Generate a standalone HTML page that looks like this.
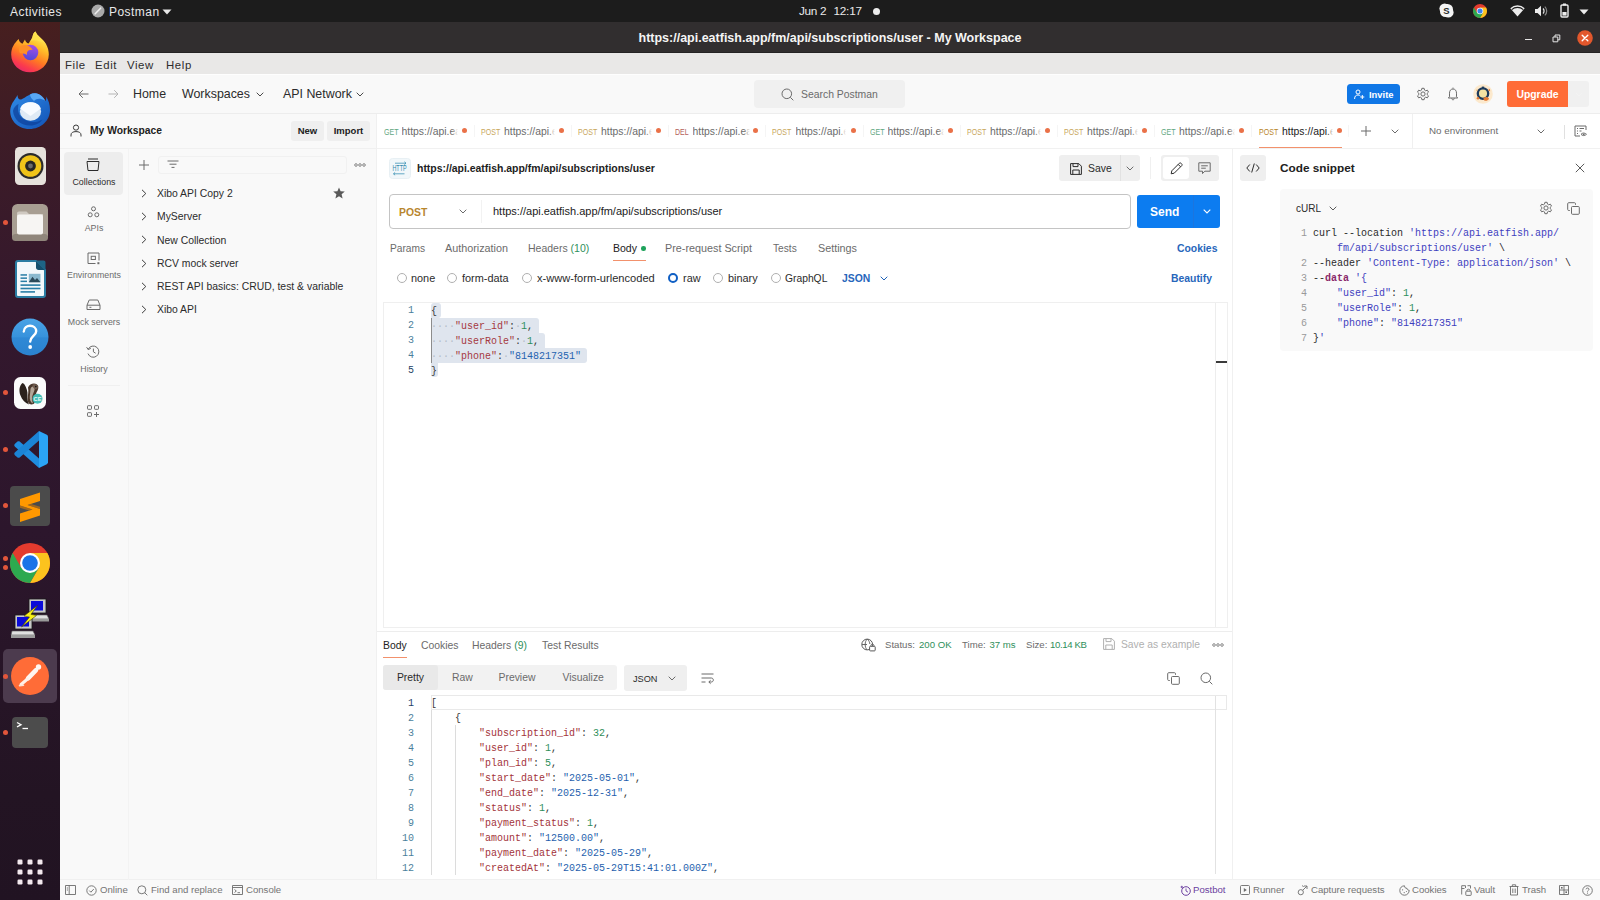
<!DOCTYPE html>
<html>
<head>
<meta charset="utf-8">
<title>Postman</title>
<style>
*{box-sizing:border-box;margin:0;padding:0}
html,body{width:1600px;height:900px;overflow:hidden;background:#fff}
body{font-family:"Liberation Sans",sans-serif;font-size:10.4px;color:#212121;position:relative}
.a{position:absolute;white-space:nowrap}
.t{position:absolute;white-space:nowrap;line-height:14px;height:14px}
svg{position:absolute;overflow:visible}
.mono{font-family:"Liberation Mono",monospace;font-size:10px}
.g{color:#6b6b6b}
/* region backgrounds */
#topbar{left:0;top:0;width:1600px;height:22px;background:#1c1c1c}
#dock{left:0;top:22px;width:60px;height:878px;background:linear-gradient(180deg,#471f1f 0%,#3d1c27 13.5%,#34182d 32%,#2c162c 58%,#231423 88%,#211322 100%)}
#titlebar{left:60px;top:22px;width:1540px;height:31px;background:#312e2f;border-bottom:1px solid #252324}
#menubar{left:60px;top:53px;width:1540px;height:21px;background:#e9e8e7}
#header{left:60px;top:74px;width:1540px;height:40px;background:#f9f9f9;border-top:1px solid #fefefe;border-bottom:1px solid #ededed}
#side{left:60px;top:114px;width:317px;height:766px;background:#f9f9f9;border-right:1px solid #f0f0f0}
#footer{left:60px;top:879px;width:1540px;height:21px;background:#f9f9f9;border-top:1px solid #f0f0f0}
</style>
</head>
<body>
<div class="a" id="topbar"></div>
<div class="a" id="dock"></div>
<div class="a" id="titlebar"></div>
<div class="a" id="menubar"></div>
<div class="a" id="header"></div>
<div class="a" id="side"></div>
<div class="a" id="footer"></div>
<!-- top bar -->
<div class="t" style="left:10px;top:4.5px;font-size:12px;letter-spacing:.45px;color:#e8e8e8">Activities</div>
<svg style="left:91px;top:4px" width="14" height="14" viewBox="0 0 14 14"><circle cx="7" cy="7" r="6.5" fill="#a9a9a9"/><path d="M4.2 9.8 L9.6 4.2" stroke="#ededed" stroke-width="1.6" stroke-linecap="round"/></svg>
<div class="t" style="left:109px;top:4.5px;font-size:12px;letter-spacing:.45px;color:#e8e8e8">Postman</div>
<svg style="left:162px;top:9px" width="10" height="6" viewBox="0 0 10 6"><path d="M0.5 0.5 H9.5 L5 5.5Z" fill="#e8e8e8"/></svg>
<div class="t" style="left:799px;top:4px;font-size:11.8px;letter-spacing:-.3px;color:#e8e8e8">Jun 2</div><div class="t" style="left:833.5px;top:4px;font-size:11.8px;letter-spacing:-.25px;color:#e8e8e8">12:17</div>
<div class="a" style="left:873px;top:7.5px;width:7px;height:7px;border-radius:50%;background:#ececec"></div>
<!-- tray -->
<svg style="left:1439px;top:3px" width="15" height="15" viewBox="0 0 15 15"><circle cx="5.600" cy="5.600" r="5.200" fill="#f4f4f4"/><circle cx="9.400" cy="9.400" r="5.200" fill="#f4f4f4"/><rect x="1" y="1" width="13" height="13" rx="5.500" fill="#f4f4f4"/><text x="7.500" y="11" font-family="Liberation Sans" font-weight="700" font-size="9.500" text-anchor="middle" fill="#2a2a2a">S</text></svg>
<svg style="left:1473px;top:3.500px" width="14" height="14" viewBox="0 0 40 40"><circle cx="20" cy="20" r="20" fill="#e33b2e"/><path d="M20 10 H37.320 A20 20 0 0 1 20 40 L28.660 25 L20 20Z" fill="#fcc31e"/><path d="M20 40 A20 20 0 0 1 2.680 10 L11.340 25 L20 20 L28.660 25Z" fill="#2da94f"/><circle cx="20" cy="20" r="9.500" fill="#f1f1f1"/><circle cx="20" cy="20" r="7.200" fill="#3b82f0"/></svg>
<svg style="left:1510px;top:5px" width="15" height="12" viewBox="0 0 15 12"><path d="M7.500 11.500 L0.300 3.200 A10.500 10.500 0 0 1 14.700 3.200 Z" fill="#ececec"/><path d="M1.700 4.600 A8.600 8.600 0 0 1 13.300 4.600" fill="none" stroke="#1c1c1c" stroke-width="1.100"/></svg>
<svg style="left:1534px;top:4px" width="15" height="14" viewBox="0 0 15 14"><path d="M1 5 H3.500 L7 1.800 V12.200 L3.500 9 H1Z" fill="#ececec"/><path d="M9 4.500 A3.500 3.500 0 0 1 9 9.500" stroke="#ececec" stroke-width="1.200" fill="none"/><path d="M10.800 2.600 A6 6 0 0 1 10.800 11.400" stroke="#8a8a8a" stroke-width="1.200" fill="none"/></svg>
<svg style="left:1560px;top:3px" width="9" height="15" viewBox="0 0 9 15"><rect x="3" y="0.500" width="3" height="2" fill="#ececec"/><rect x="1" y="2" width="7" height="12" rx="1" fill="none" stroke="#ececec" stroke-width="1.400"/><rect x="2.400" y="9" width="4.200" height="3.600" fill="#ececec"/></svg>
<svg style="left:1579px;top:9px" width="10" height="6" viewBox="0 0 10 6"><path d="M0.500 0.500 H9.500 L5 5.500Z" fill="#ececec"/></svg>
<!-- title bar -->
<div class="t" style="left:60px;top:31px;width:1540px;text-align:center;font-size:13.4px;font-weight:700;transform:scaleX(.933);color:#f5f5f5">https://api.eatfish.app/fm/api/subscriptions/user - My Workspace</div>
<div class="a" style="left:1525px;top:39px;width:7px;height:1.200px;background:#e6e6e6"></div>
<svg style="left:1552px;top:33.500px" width="9" height="9" viewBox="0 0 9 9"><path d="M1 3 H5.800 V7.800 H1Z M3 3 V1 H7.800 V5.800 H5.800" fill="none" stroke="#e6e6e6" stroke-width="1"/></svg>
<svg style="left:1577px;top:29.500px" width="16" height="16" viewBox="0 0 16 16"><circle cx="8" cy="8" r="7.800" fill="#e2572c"/><path d="M5.2 5.2 L10.8 10.8 M10.8 5.2 L5.2 10.8" stroke="#fff" stroke-width="1.4" stroke-linecap="round"/></svg>
<!-- menu bar -->
<div class="t" style="left:65px;top:57.5px;font-size:11.4px;letter-spacing:.6px;color:#2d2d2d">File</div>
<div class="t" style="left:95px;top:57.5px;font-size:11.4px;letter-spacing:.6px;color:#2d2d2d">Edit</div>
<div class="t" style="left:127px;top:57.5px;font-size:11.4px;letter-spacing:.6px;color:#2d2d2d">View</div>
<div class="t" style="left:166px;top:57.5px;font-size:11.4px;letter-spacing:.6px;color:#2d2d2d">Help</div>
<!--TOPBAR_END-->
<!-- dock icons -->
<!-- firefox -->
<svg style="left:10px;top:31px" width="40" height="42" viewBox="0 0 40 42">
<defs><linearGradient id="ffg" x1="0.75" y1="0.05" x2="0.3" y2="1"><stop offset="0" stop-color="#fff060"/><stop offset="0.3" stop-color="#ffc02a"/><stop offset="0.6" stop-color="#ff7a22"/><stop offset="0.85" stop-color="#fb3a4e"/><stop offset="1" stop-color="#e82a6a"/></linearGradient>
<linearGradient id="ffp" x1="0.6" y1="0" x2="0.4" y2="1"><stop offset="0" stop-color="#a74fe6"/><stop offset="1" stop-color="#5148d8"/></linearGradient></defs>
<path d="M25.500 0.500 C27 5 33 8 36 13 C38 16.500 38.800 20 38.800 23.500 C38.800 33.500 30.500 41.300 20 41.300 C9.500 41.300 1.200 33.500 1.200 23.500 C1.200 16.500 4.500 12 8.700 8 C9 10.500 10.500 12 12.500 12.800 C13.500 11 14.500 9.500 15 8.500 C15.500 10.500 16.500 12 18.500 12.500 C20.500 10 22.500 7 22.800 4.500 C23 3 24 1.500 25.500 0.500Z" fill="url(#ffg)"/>
<circle cx="20.500" cy="21.500" r="7.800" fill="url(#ffp)"/>
<path d="M9 16 C13 12.500 19.500 13.500 22.800 18.800 C20.300 18.300 18.200 19 17.200 21 C16.800 22 16.800 23 17 24 C15 22.500 12.500 21.800 10 22.300 C9 20.500 8.700 18 9 16Z" fill="#ff8f28"/>
<path d="M25.500 0.500 C27 5 33 8 36 13 C34 11 31.500 10.300 29.500 10.500 C27.500 9.500 25.500 9 23.500 9.200 C22 9.300 20.200 10 18.500 12.500 C20.500 10 22.500 7 22.800 4.500 C23 3 24 1.500 25.500 0.500Z" fill="#ffe14d" opacity="0.9"/>
</svg>
<!-- thunderbird -->
<svg style="left:9px;top:89px" width="42" height="41" viewBox="0 0 42 41">
<defs><linearGradient id="tbg" x1="0" y1="0" x2="1" y2="1"><stop offset="0" stop-color="#2f8be8"/><stop offset="1" stop-color="#1252b5"/></linearGradient></defs>
<path d="M8.5 6 C6 11 3 13 1.5 19 C-0.5 30 8 40 20.5 40 C32 40 41 31.5 41 21 C41 15.5 39.5 11 37 7.5 C37.5 9.5 37 11 36.5 12 C33 5.5 26.5 2.5 21 5.5 C16 8 13.5 10.5 11.5 10.5 C9.5 10.5 8.5 8.5 8.5 6Z" fill="url(#tbg)"/>
<path d="M21 5.500 C26 2.500 33 5 36 11.500 C31 9 27.500 9.500 25 12 C23 10 21 8 21 5.500Z" fill="#58a8f5"/>
<ellipse cx="21.500" cy="22.500" rx="10.600" ry="9.300" fill="#dfeaf5"/>
<path d="M11.200 19.500 L21.500 27 L31.800 19.500 C30 15 26.500 13.300 21.500 13.300 C16.500 13.300 13 15 11.200 19.500Z" fill="#f8fbff"/>
<path d="M4 22 C5 31 12 36.500 21 36.500 C27 36.500 31 34 33.500 30.500 C28 34 20 34 14.500 30 C10 27 8 22 9.500 15 C6.500 16.500 4.500 19 4 22Z" fill="#0d3f99" opacity="0.7"/>
</svg>
<!-- rhythmbox -->
<svg style="left:15px;top:147px" width="31" height="38" viewBox="0 0 31 38"><rect width="31" height="38" rx="4.5" fill="#e6e2dc"/><circle cx="15.500" cy="19" r="13" fill="#2b2b2b"/><circle cx="15.500" cy="19" r="10.800" fill="#f0c419"/><circle cx="15.500" cy="19" r="5.400" fill="#262626"/><circle cx="15.500" cy="19" r="2.400" fill="#6b6b6b"/></svg>
<!-- files -->
<svg style="left:12px;top:204px" width="36" height="37" viewBox="0 0 36 37"><rect width="36" height="37" rx="5.500" fill="#a89e92"/><rect y="30" width="36" height="7" rx="3.500" fill="#90867b"/><path d="M5 9.500 C5 8.400 5.800 7.500 7 7.500 H14.500 L17 10 H31 V13 H5Z" fill="#d0c9c1"/><rect x="5" y="10.500" width="26" height="20" rx="2" fill="#f7f5f3"/></svg>
<div class="a" style="left:3px;top:220px;width:5px;height:5px;border-radius:50%;background:#e2563b"></div>
<!-- libreoffice writer -->
<svg style="left:15px;top:260px" width="31" height="38" viewBox="0 0 31 38"><path d="M3 1 H21 L30 10 V35 C30 36.200 29.200 37 28 37 H3 C1.800 37 1 36.200 1 35 V3 C1 1.800 1.800 1 3 1Z" fill="#f3f8fb" stroke="#2b7da3" stroke-width="2"/><path d="M21 0.500 L30.500 10 L30.500 2.500 C30.500 1.300 29.700 0.500 28.500 0.500Z" fill="#1d6485"/><path d="M21 1 L30 10 H23.500 C22 10 21 9 21 7.500Z" fill="#15506e"/><rect x="5.500" y="14.200" width="6.500" height="1.500" fill="#2a7ea6"/><rect x="5.500" y="17.400" width="6.500" height="1.500" fill="#2a7ea6"/><rect x="5.500" y="20.600" width="6.500" height="1.500" fill="#2a7ea6"/><rect x="13.800" y="13.800" width="11.700" height="8.400" fill="#8ab9cf"/><path d="M13.800 22.200 L17.500 16.800 L20 20 L22 18 L25.500 22.200Z" fill="#2c4a5a"/><rect x="5.500" y="24.300" width="20" height="1.600" fill="#2a7ea6"/><rect x="5.500" y="27.700" width="20" height="1.600" fill="#2a7ea6"/><rect x="5.500" y="31.100" width="14.500" height="1.600" fill="#2a7ea6"/></svg>
<!-- help -->
<svg style="left:11px;top:318px" width="38" height="38" viewBox="0 0 38 38"><defs><linearGradient id="hg" x1="0" y1="0" x2="0" y2="1"><stop offset="0" stop-color="#4aa3e6"/><stop offset="0.5" stop-color="#3792dc"/><stop offset="0.52" stop-color="#2f89d6"/><stop offset="1" stop-color="#2b82cf"/></linearGradient></defs><circle cx="19" cy="19" r="18.500" fill="url(#hg)"/><path d="M12.800 13.500 C13 9.500 16 7.800 19 7.800 C22.500 7.800 25.200 10 25.200 13.200 C25.200 17.500 19.200 18.500 19.200 23.500" fill="none" stroke="#fff" stroke-width="2.400" stroke-linecap="round"/><circle cx="19.200" cy="29" r="1.900" fill="#fff"/></svg>
<!-- beaver -->
<svg style="left:14px;top:377px" width="32" height="32" viewBox="0 0 32 32"><rect width="32" height="32" rx="6.500" fill="#fbfbfb"/><path d="M8.500 6 C5.500 8.500 4.500 13.500 6.500 18.500 C8 22.500 11 26 15 27.500 C13.500 24.500 13.200 21.500 13.500 18.500 C13.800 14.500 12.500 10.500 10.500 7.500 C9.800 6.600 9.200 6.200 8.500 6Z" fill="#2b211c"/><path d="M14 10.500 C15.500 7 20 5.500 23 7.500 C25 9 24.500 12 23.300 14 C22 16 21.500 18.500 22 21 C22.500 24.500 20.500 27.500 17.500 27.500 C14.500 27.500 13.200 24.500 13.600 21 C14 17.500 14.800 14 14 10.500Z" fill="#4a372b"/><path d="M16.500 12 C17 9.500 19.500 8.800 20.500 10.500 C21.200 13 19.500 15.500 18.500 18.500 C17.800 21 18 24 19 26.500 C16.500 25.500 15.500 22.500 15.800 19.500 C16 17 16.300 14.500 16.500 12Z" fill="#b3a597"/><path d="M18.500 7.500 C20.500 6.200 23.500 7 24 9.500 C24.300 11.500 22.500 12.500 21 12 C19.500 11.500 18.500 9.800 18.500 7.500Z" fill="#6e5a4c"/><circle cx="21.800" cy="9.600" r="0.800" fill="#111"/><circle cx="23.500" cy="21.800" r="5" fill="#45bdb6"/><text x="23.500" y="24" font-family="Liberation Sans" font-weight="700" font-size="5.600" text-anchor="middle" fill="#eafaf8">CE</text></svg>
<div class="a" style="left:3px;top:390px;width:5px;height:5px;border-radius:50%;background:#e2563b"></div>
<!-- vscode -->
<svg style="left:12px;top:430px" width="37" height="39" viewBox="0 0 37 39"><path d="M27 28.500 L27 38 L3 16.800 C2 15.900 2 14.600 3 13.700 L5.500 11.500 C6.200 11 7 11 7.700 11.600Z" fill="#1f8de0"/><path d="M27 10.500 L27 1 L3 22.200 C2 23.100 2 24.400 3 25.300 L5.500 27.500 C6.200 28 7 28 7.700 27.400Z" fill="#1b84d6"/><path d="M27 1 L34.800 4.800 C35.600 5.200 36 5.900 36 6.700 V32.300 C36 33.100 35.600 33.800 34.800 34.200 L27 38Z" fill="#2ba4f6"/></svg>
<div class="a" style="left:3px;top:447px;width:5px;height:5px;border-radius:50%;background:#e2563b"></div>
<!-- sublime -->
<svg style="left:10px;top:486px" width="40" height="40" viewBox="0 0 40 40"><rect width="40" height="40" rx="4" fill="#4b4b4b"/><path d="M10 13 L30 6.500 V15 L17.500 19 L30 23 V29.500 L10 36 V27.500 L22.500 23.500 L10 19.500Z" fill="#ff9800"/><path d="M10 19.500 L22.500 23.500 L19 24.600 L10 21.800Z M30 23 L17.500 19 L21 17.900 L30 20.700Z" fill="#d97800" opacity="0.6"/></svg>
<div class="a" style="left:3px;top:503px;width:5px;height:5px;border-radius:50%;background:#e2563b"></div>
<!-- chrome -->
<svg style="left:10px;top:543px" width="40" height="40" viewBox="0 0 40 40"><circle cx="20" cy="20" r="20" fill="#e33b2e"/><path d="M20 10 H37.320 A20 20 0 0 1 20 40 L28.660 25 L20 20Z" fill="#fcc31e"/><path d="M20 40 A20 20 0 0 1 2.680 10 L11.340 25 L20 20 L28.660 25Z" fill="#2da94f"/><circle cx="20" cy="20" r="10" fill="#fff"/><circle cx="20" cy="20" r="7.800" fill="#1a73e8"/></svg>
<div class="a" style="left:3px;top:556px;width:5px;height:5px;border-radius:50%;background:#e2563b"></div>
<div class="a" style="left:3px;top:565px;width:5px;height:5px;border-radius:50%;background:#e2563b"></div>
<!-- putty -->
<svg style="left:10px;top:598px" width="40" height="42" viewBox="0 0 40 42">
<g><rect x="19" y="1" width="17" height="14" fill="#c8c8c8" stroke="#1a1a1a" stroke-width="0.800"/><rect x="21" y="3" width="12" height="9.500" fill="#0a0ad8"/><path d="M17 17 H37 L39 21 H19Z" fill="#e0e0e0" stroke="#555" stroke-width="0.600"/><rect x="19" y="21" width="20" height="2.500" fill="#9a9a9a"/></g>
<g><rect x="5" y="17" width="17" height="14" fill="#c8c8c8" stroke="#1a1a1a" stroke-width="0.800"/><rect x="7" y="19" width="12" height="9.500" fill="#0a0ad8"/><path d="M2 33 H23 L25 37 H1Z" fill="#e0e0e0" stroke="#555" stroke-width="0.600"/><rect x="1" y="37" width="24" height="3" fill="#9a9a9a"/></g>
<path d="M27.500 7.500 L14 18 L19.500 19 L11.500 29 L26.500 17.500 L21 16.300Z" fill="#f7f01a" stroke="#3a3a00" stroke-width="0.600"/></svg>
<!-- postman -->
<div class="a" style="left:3px;top:649px;width:54px;height:54px;border-radius:5px;background:#4c3b4e"></div>
<svg style="left:11px;top:657px" width="38" height="38" viewBox="0 0 38 38"><circle cx="19" cy="19" r="19" fill="#ff6c37"/><circle cx="27.500" cy="10" r="2.700" fill="#fff6f0"/><path d="M25 13.200 L17 21.300" stroke="#fff6f0" stroke-width="4.600" stroke-linecap="round"/><path d="M16.500 22 L10 27.500" stroke="#fff1e8" stroke-width="3" stroke-linecap="round"/><path d="M8.500 28.700 L12.500 28.200" stroke="#ffe3d4" stroke-width="1.600" stroke-linecap="round"/></svg>
<div class="a" style="left:3px;top:674px;width:5px;height:5px;border-radius:50%;background:#e2563b"></div>
<!-- terminal -->
<svg style="left:12px;top:717px" width="36" height="31" viewBox="0 0 36 31"><rect width="36" height="31" rx="4" fill="#4c4c4c"/><path d="M5 5.500 L9 7.700 L5 9.900" fill="none" stroke="#fff" stroke-width="1.300"/><path d="M10.500 11.500 H16" stroke="#fff" stroke-width="1.300"/></svg>
<div class="a" style="left:3px;top:730px;width:5px;height:5px;border-radius:50%;background:#e2563b"></div>
<!-- app grid -->
<svg style="left:17px;top:859px" width="26" height="26" viewBox="0 0 26 26"><g fill="#f3e9ee"><rect x="0.500" y="0.500" width="5" height="5" rx="1.200"/><rect x="10.500" y="0.500" width="5" height="5" rx="1.200"/><rect x="20.500" y="0.500" width="5" height="5" rx="1.200"/><rect x="0.500" y="10.500" width="5" height="5" rx="1.200"/><rect x="10.500" y="10.500" width="5" height="5" rx="1.200"/><rect x="20.500" y="10.500" width="5" height="5" rx="1.200"/><rect x="0.500" y="20.500" width="5" height="5" rx="1.200"/><rect x="10.500" y="20.500" width="5" height="5" rx="1.200"/><rect x="20.500" y="20.500" width="5" height="5" rx="1.200"/></g></svg>
<!--DOCK_END-->
<!-- header nav -->
<svg style="left:78px;top:89px" width="11" height="10" viewBox="0 0 11 10"><path d="M10.5 5 H1 M4.8 1.2 L1 5 L4.8 8.8" fill="none" stroke="#6b6b6b" stroke-width="1"/></svg>
<svg style="left:108px;top:89px" width="11" height="10" viewBox="0 0 11 10"><path d="M0.5 5 H10 M6.2 1.2 L10 5 L6.2 8.8" fill="none" stroke="#b5b5b5" stroke-width="1"/></svg>
<div class="t" style="left:133px;top:87px;font-size:12.4px;color:#2b2b2b">Home</div>
<div class="t" style="left:182px;top:87px;font-size:12.4px;color:#2b2b2b">Workspaces</div>
<svg style="left:256px;top:92px" width="8" height="5" viewBox="0 0 8 5"><path d="M0.7 0.7 L4 4 L7.3 0.7" fill="none" stroke="#4a4a4a" stroke-width="1"/></svg>
<div class="t" style="left:283px;top:87px;font-size:12.4px;color:#2b2b2b">API Network</div>
<svg style="left:356px;top:92px" width="8" height="5" viewBox="0 0 8 5"><path d="M0.7 0.7 L4 4 L7.3 0.7" fill="none" stroke="#4a4a4a" stroke-width="1"/></svg>
<!-- search -->
<div class="a" style="left:754px;top:80px;width:151px;height:28px;background:#f0f0f0;border-radius:4px"></div>
<svg style="left:781px;top:88px" width="13" height="13" viewBox="0 0 13 13"><circle cx="5.8" cy="5.8" r="4.8" fill="none" stroke="#6b6b6b" stroke-width="1"/><path d="M9.3 9.3 L12.3 12.3" stroke="#6b6b6b" stroke-width="1"/></svg>
<div class="t g" style="left:801px;top:87.600px;font-size:10.4px">Search Postman</div>
<!-- invite -->
<div class="a" style="left:1347px;top:84px;width:53px;height:20px;background:#1077e6;border-radius:3.5px"></div>
<svg style="left:1354px;top:89px" width="11" height="11" viewBox="0 0 11 11"><circle cx="4" cy="3" r="2" fill="none" stroke="#fff" stroke-width="1"/><path d="M0.6 10 C0.6 7 2 6 4 6 C5 6 5.8 6.3 6.3 6.8" fill="none" stroke="#fff" stroke-width="1"/><path d="M8.3 6 V10 M6.3 8 H10.3" stroke="#fff" stroke-width="1"/></svg>
<div class="t" style="left:1369px;top:87.5px;font-size:9.4px;font-weight:700;color:#fff">Invite</div>
<!-- gear -->
<svg style="left:1416px;top:87px" width="14" height="14" viewBox="0 0 14 14"><path d="M5.9 0.8 H8.1 L8.5 2.6 L9.7 3.3 L11.4 2.7 L12.5 4.6 L11.2 5.8 V7.2 L12.5 8.4 L11.4 10.3 L9.7 9.7 L8.5 10.4 L8.1 12.2 H5.9 L5.5 10.4 L4.3 9.7 L2.6 10.3 L1.5 8.4 L2.8 7.2 V5.8 L1.5 4.6 L2.6 2.7 L4.3 3.3 L5.5 2.6Z" transform="translate(0 0.5)" fill="none" stroke="#6b6b6b" stroke-width="1" stroke-linejoin="round"/><circle cx="7" cy="7" r="2.1" fill="none" stroke="#6b6b6b" stroke-width="1"/></svg>
<!-- bell -->
<svg style="left:1447px;top:87px" width="12" height="14" viewBox="0 0 12 14"><path d="M6 0.600 V1.600 M2.500 9.800 V6.200 C2.500 3.600 3.800 2 6 2 C8.200 2 9.500 3.600 9.500 6.200 V9.800 L10.700 11 H1.300Z" fill="none" stroke="#6b6b6b" stroke-width="1" stroke-linejoin="round"/><path d="M4.800 11.200 C4.800 13.400 7.200 13.400 7.200 11.200" fill="none" stroke="#6b6b6b" stroke-width="1"/></svg>
<!-- avatar -->
<svg style="left:1473px;top:84px" width="20" height="20" viewBox="0 0 20 20"><circle cx="10" cy="10" r="9.800" fill="#fce9cd"/><circle cx="10" cy="9.600" r="5.200" fill="#f3e2a2" stroke="#1d3a5b" stroke-width="2.300"/><path d="M8.800 2.600 H11.200 V4 H8.800Z" fill="#1d3a5b"/><path d="M11 13.500 C12.500 12.500 15.500 12.800 16 14.800 C15 16.800 12.500 17.300 11.300 16.400 C10.300 15.600 10.200 14.200 11 13.500Z" fill="#e27b35"/><circle cx="5" cy="14.300" r="1.300" fill="#e27b35"/><path d="M15.800 4.500 C17 5.200 17.400 6.500 17 7.600 L15.500 6.600Z" fill="#e27b35"/><path d="M3.200 6 L4.600 5.200 L4.200 7.400Z" fill="#e8a14c"/></svg>
<!-- upgrade -->
<div class="a" style="left:1507px;top:81px;width:82px;height:26px;background:#f0f0f0;border-radius:3px"></div>
<div class="a" style="left:1507px;top:81px;width:61px;height:26px;background:#ff6c37;border-radius:3px 0 0 3px"></div>
<div class="t" style="left:1507px;top:87.5px;width:61px;text-align:center;font-size:10.4px;font-weight:700;color:#fff">Upgrade</div>
<svg style="left:1575px;top:92px" width="8" height="5" viewBox="0 0 8 5"><path d="M0.7 0.7 L4 4 L7.3 0.7" fill="none" stroke="#f3f3f3" stroke-width="1"/></svg>
<!--HEADER_END-->
<!-- workspace row -->
<div class="a" style="left:60px;top:148px;width:317px;height:1px;background:#f0f0f0"></div>
<svg style="left:70px;top:124px" width="12" height="13" viewBox="0 0 12 13"><circle cx="6" cy="3.6" r="2.6" fill="none" stroke="#3a3a3a" stroke-width="1"/><path d="M1 12.5 V11 C1 8.6 3 7.6 6 7.6 C9 7.6 11 8.6 11 11 V12.5" fill="none" stroke="#3a3a3a" stroke-width="1"/></svg>
<div class="t" style="left:90px;top:124px;font-size:10.3px;font-weight:700;color:#212121">My Workspace</div>
<div class="a" style="left:291px;top:121px;width:33px;height:20px;background:#efefef;border-radius:3px"></div>
<div class="t" style="left:291px;top:124px;width:33px;text-align:center;font-size:9.5px;font-weight:700;color:#212121">New</div>
<div class="a" style="left:327px;top:121px;width:43px;height:20px;background:#efefef;border-radius:3px"></div>
<div class="t" style="left:327px;top:124px;width:43px;text-align:center;font-size:9.5px;font-weight:700;color:#212121">Import</div>
<!-- icon column -->
<div class="a" style="left:128px;top:149px;width:1px;height:731px;background:#f3f3f3"></div>
<div class="a" style="left:64px;top:152px;width:59px;height:43px;background:#ededed;border-radius:4px"></div>
<svg style="left:86px;top:158px" width="14" height="14" viewBox="0 0 14 14"><path d="M2 1 H12 M1 3.5 H13 L12 12.5 H2Z" fill="none" stroke="#2b2b2b" stroke-width="1" stroke-linejoin="round"/></svg>
<div class="t" style="left:60px;top:175px;width:68px;text-align:center;font-size:8.8px;color:#2b2b2b">Collections</div>
<svg style="left:87px;top:206px" width="13" height="12" viewBox="0 0 13 12"><circle cx="6.5" cy="2.8" r="2" fill="none" stroke="#6b6b6b" stroke-width="1"/><circle cx="3.2" cy="8.8" r="2" fill="none" stroke="#6b6b6b" stroke-width="1"/><circle cx="9.8" cy="8.8" r="2" fill="none" stroke="#6b6b6b" stroke-width="1"/></svg>
<div class="t g" style="left:60px;top:221px;width:68px;text-align:center;font-size:8.8px">APIs</div>
<svg style="left:87px;top:252px" width="13" height="13" viewBox="0 0 13 13"><path d="M12 8.5 V1 H1 V11.5 H8.5" fill="none" stroke="#6b6b6b" stroke-width="1" stroke-linejoin="round"/><rect x="4.2" y="4.3" width="4.2" height="3.2" fill="none" stroke="#6b6b6b" stroke-width="1"/><rect x="10.4" y="10.2" width="2" height="2" fill="#6b6b6b"/></svg>
<div class="t g" style="left:60px;top:268px;width:68px;text-align:center;font-size:8.8px">Environments</div>
<svg style="left:86px;top:299px" width="15" height="12" viewBox="0 0 15 12"><path d="M1 6.2 L3.2 1 H11.8 L14 6.2 V10.5 H1Z M1 6.2 H14" fill="none" stroke="#6b6b6b" stroke-width="1" stroke-linejoin="round"/><path d="M3.4 8.3 H5.4" stroke="#6b6b6b" stroke-width="1"/></svg>
<div class="t g" style="left:60px;top:315px;width:68px;text-align:center;font-size:8.8px">Mock servers</div>
<svg style="left:86px;top:345px" width="14" height="13" viewBox="0 0 14 13"><path d="M2.2 4.2 A5.6 5.6 0 1 1 2 8.6" fill="none" stroke="#6b6b6b" stroke-width="1"/><path d="M0.6 2.2 L2.2 4.6 L4.8 3.4" fill="none" stroke="#6b6b6b" stroke-width="1"/><path d="M7.4 3.6 V6.8 L9.6 8.2" fill="none" stroke="#6b6b6b" stroke-width="1"/></svg>
<div class="t g" style="left:60px;top:362px;width:68px;text-align:center;font-size:8.8px">History</div>
<div class="a" style="left:68px;top:385px;width:52px;height:1px;background:#f0f0f0"></div>
<svg style="left:87px;top:405px" width="13" height="13" viewBox="0 0 13 13"><rect x="0.5" y="0.7" width="4" height="3.6" rx="0.6" fill="none" stroke="#6b6b6b" stroke-width="1"/><rect x="7.5" y="0.7" width="4" height="3.6" rx="0.6" fill="none" stroke="#6b6b6b" stroke-width="1"/><rect x="0.5" y="7.7" width="4" height="3.6" rx="0.6" fill="none" stroke="#6b6b6b" stroke-width="1"/><path d="M9.5 7 V12 M7 9.5 H12" stroke="#6b6b6b" stroke-width="1"/></svg>
<!-- collection list -->
<svg style="left:139px;top:160px" width="10" height="10" viewBox="0 0 10 10"><path d="M5 0 V10 M0 5 H10" stroke="#6b6b6b" stroke-width="1"/></svg>
<div class="a" style="left:158px;top:156px;width:189px;height:18px;border:1px solid #f1f1f1;border-radius:3px;background:#f9f9f9"></div>
<svg style="left:167px;top:160px" width="12" height="10" viewBox="0 0 12 10"><path d="M0.5 1 H11.5 M2.5 4.2 H9.5 M4.5 7.4 H7.5" stroke="#6b6b6b" stroke-width="1"/></svg>
<svg style="left:354px;top:163px" width="12" height="4" viewBox="0 0 12 4"><circle cx="2" cy="2" r="1.3" fill="none" stroke="#6b6b6b" stroke-width="0.8"/><circle cx="6" cy="2" r="1.3" fill="none" stroke="#6b6b6b" stroke-width="0.8"/><circle cx="10" cy="2" r="1.3" fill="none" stroke="#6b6b6b" stroke-width="0.8"/></svg>
<svg style="left:141px;top:189px" width="6" height="9" viewBox="0 0 6 9"><path d="M1 0.8 L4.8 4.5 L1 8.2" fill="none" stroke="#3a3a3a" stroke-width="1"/></svg>
<div class="t" style="left:157px;top:186.8px;font-size:10.4px;color:#2b2b2b">Xibo API Copy 2</div>
<svg style="left:333px;top:187px" width="12" height="12" viewBox="0 0 12 12"><path d="M6 0.4 L7.6 4.3 L11.8 4.6 L8.6 7.3 L9.6 11.5 L6 9.2 L2.4 11.5 L3.4 7.3 L0.2 4.6 L4.4 4.3Z" fill="#5a5a5a"/></svg>
<svg style="left:141px;top:212px" width="6" height="9" viewBox="0 0 6 9"><path d="M1 0.8 L4.8 4.5 L1 8.2" fill="none" stroke="#3a3a3a" stroke-width="1"/></svg>
<div class="t" style="left:157px;top:209.8px;font-size:10.4px;color:#2b2b2b">MyServer</div>
<svg style="left:141px;top:235px" width="6" height="9" viewBox="0 0 6 9"><path d="M1 0.8 L4.8 4.5 L1 8.2" fill="none" stroke="#3a3a3a" stroke-width="1"/></svg>
<div class="t" style="left:157px;top:233.8px;font-size:10.4px;color:#2b2b2b">New Collection</div>
<svg style="left:141px;top:259px" width="6" height="9" viewBox="0 0 6 9"><path d="M1 0.8 L4.8 4.5 L1 8.2" fill="none" stroke="#3a3a3a" stroke-width="1"/></svg>
<div class="t" style="left:157px;top:256.8px;font-size:10.4px;color:#2b2b2b">RCV mock server</div>
<svg style="left:141px;top:282px" width="6" height="9" viewBox="0 0 6 9"><path d="M1 0.8 L4.8 4.5 L1 8.2" fill="none" stroke="#3a3a3a" stroke-width="1"/></svg>
<div class="t" style="left:157px;top:279.8px;font-size:10.4px;color:#2b2b2b">REST API basics: CRUD, test &amp; variable</div>
<svg style="left:141px;top:305px" width="6" height="9" viewBox="0 0 6 9"><path d="M1 0.8 L4.8 4.5 L1 8.2" fill="none" stroke="#3a3a3a" stroke-width="1"/></svg>
<div class="t" style="left:157px;top:302.8px;font-size:10.4px;color:#2b2b2b">Xibo API</div>
<!--SIDE_END-->
<!-- tabs row -->
<div class="a" style="left:377px;top:114px;width:1223px;height:34px;background:#fff"></div>
<div class="a" style="left:377px;top:148px;width:1223px;height:1px;background:#f1f1f1"></div>
<div class="t" style="left:383.5px;top:124.700px;font-size:8.600px;font-weight:400;transform:scaleX(.82);transform-origin:0 50%;color:#5fa77f">GET</div>
<div class="t" style="left:401.5px;top:124.600px;width:56px;overflow:hidden;font-size:10.4px;color:#6b6b6b">https://api.eatfish.app</div>
<div class="a" style="left:451.5px;top:122px;width:6px;height:18px;background:linear-gradient(90deg,rgba(255,255,255,0),#fff)"></div>
<div class="a" style="left:461.5px;top:128.3px;width:5px;height:5px;border-radius:50%;background:#ea7148"></div>
<div class="a" style="left:474.1px;top:125px;width:1px;height:12px;background:#f5f5f5"></div>
<div class="t" style="left:480.75px;top:124.700px;font-size:8.600px;font-weight:400;transform:scaleX(.82);transform-origin:0 50%;color:#c9a75c">POST</div>
<div class="t" style="left:504px;top:124.600px;width:50.5px;overflow:hidden;font-size:10.4px;color:#6b6b6b">https://api.eatfish.app</div>
<div class="a" style="left:548.5px;top:122px;width:6px;height:18px;background:linear-gradient(90deg,rgba(255,255,255,0),#fff)"></div>
<div class="a" style="left:559.0px;top:128.3px;width:5px;height:5px;border-radius:50%;background:#ea7148"></div>
<div class="a" style="left:571.2px;top:125px;width:1px;height:12px;background:#f5f5f5"></div>
<div class="t" style="left:577.75px;top:124.700px;font-size:8.600px;font-weight:400;transform:scaleX(.82);transform-origin:0 50%;color:#c9a75c">POST</div>
<div class="t" style="left:601px;top:124.600px;width:50.5px;overflow:hidden;font-size:10.4px;color:#6b6b6b">https://api.eatfish.app</div>
<div class="a" style="left:645.5px;top:122px;width:6px;height:18px;background:linear-gradient(90deg,rgba(255,255,255,0),#fff)"></div>
<div class="a" style="left:656.0px;top:128.3px;width:5px;height:5px;border-radius:50%;background:#ea7148"></div>
<div class="a" style="left:668.3px;top:125px;width:1px;height:12px;background:#f5f5f5"></div>
<div class="t" style="left:675px;top:124.700px;font-size:8.600px;font-weight:400;transform:scaleX(.82);transform-origin:0 50%;color:#b5605a">DEL</div>
<div class="t" style="left:692.5px;top:124.600px;width:57.5px;overflow:hidden;font-size:10.4px;color:#6b6b6b">https://api.eatfish.app</div>
<div class="a" style="left:744.0px;top:122px;width:6px;height:18px;background:linear-gradient(90deg,rgba(255,255,255,0),#fff)"></div>
<div class="a" style="left:753.25px;top:128.3px;width:5px;height:5px;border-radius:50%;background:#ea7148"></div>
<div class="a" style="left:765.4px;top:125px;width:1px;height:12px;background:#f5f5f5"></div>
<div class="t" style="left:772px;top:124.700px;font-size:8.600px;font-weight:400;transform:scaleX(.82);transform-origin:0 50%;color:#c9a75c">POST</div>
<div class="t" style="left:795.5px;top:124.600px;width:50.5px;overflow:hidden;font-size:10.4px;color:#6b6b6b">https://api.eatfish.app</div>
<div class="a" style="left:840.0px;top:122px;width:6px;height:18px;background:linear-gradient(90deg,rgba(255,255,255,0),#fff)"></div>
<div class="a" style="left:850.5px;top:128.3px;width:5px;height:5px;border-radius:50%;background:#ea7148"></div>
<div class="a" style="left:862.5px;top:125px;width:1px;height:12px;background:#f5f5f5"></div>
<div class="t" style="left:869.5px;top:124.700px;font-size:8.600px;font-weight:400;transform:scaleX(.82);transform-origin:0 50%;color:#5fa77f">GET</div>
<div class="t" style="left:887.5px;top:124.600px;width:56px;overflow:hidden;font-size:10.4px;color:#6b6b6b">https://api.eatfish.app</div>
<div class="a" style="left:937.5px;top:122px;width:6px;height:18px;background:linear-gradient(90deg,rgba(255,255,255,0),#fff)"></div>
<div class="a" style="left:947.5px;top:128.3px;width:5px;height:5px;border-radius:50%;background:#ea7148"></div>
<div class="a" style="left:959.6px;top:125px;width:1px;height:12px;background:#f5f5f5"></div>
<div class="t" style="left:966.5px;top:124.700px;font-size:8.600px;font-weight:400;transform:scaleX(.82);transform-origin:0 50%;color:#c9a75c">POST</div>
<div class="t" style="left:990px;top:124.600px;width:50.5px;overflow:hidden;font-size:10.4px;color:#6b6b6b">https://api.eatfish.app</div>
<div class="a" style="left:1034.5px;top:122px;width:6px;height:18px;background:linear-gradient(90deg,rgba(255,255,255,0),#fff)"></div>
<div class="a" style="left:1045.0px;top:128.3px;width:5px;height:5px;border-radius:50%;background:#ea7148"></div>
<div class="a" style="left:1056.7px;top:125px;width:1px;height:12px;background:#f5f5f5"></div>
<div class="t" style="left:1063.5px;top:124.700px;font-size:8.600px;font-weight:400;transform:scaleX(.82);transform-origin:0 50%;color:#c9a75c">POST</div>
<div class="t" style="left:1087px;top:124.600px;width:50.5px;overflow:hidden;font-size:10.4px;color:#6b6b6b">https://api.eatfish.app</div>
<div class="a" style="left:1131.5px;top:122px;width:6px;height:18px;background:linear-gradient(90deg,rgba(255,255,255,0),#fff)"></div>
<div class="a" style="left:1142.0px;top:128.3px;width:5px;height:5px;border-radius:50%;background:#ea7148"></div>
<div class="a" style="left:1153.8px;top:125px;width:1px;height:12px;background:#f5f5f5"></div>
<div class="t" style="left:1161px;top:124.700px;font-size:8.600px;font-weight:400;transform:scaleX(.82);transform-origin:0 50%;color:#5fa77f">GET</div>
<div class="t" style="left:1179px;top:124.600px;width:56px;overflow:hidden;font-size:10.4px;color:#6b6b6b">https://api.eatfish.app</div>
<div class="a" style="left:1229.0px;top:122px;width:6px;height:18px;background:linear-gradient(90deg,rgba(255,255,255,0),#fff)"></div>
<div class="a" style="left:1239.0px;top:128.3px;width:5px;height:5px;border-radius:50%;background:#ea7148"></div>
<div class="a" style="left:1250.9px;top:125px;width:1px;height:12px;background:#f5f5f5"></div>
<div class="t" style="left:1258.5px;top:124.700px;font-size:8.600px;font-weight:400;transform:scaleX(.82);transform-origin:0 50%;color:#b8862a">POST</div>
<div class="t" style="left:1282px;top:124.600px;width:50.5px;overflow:hidden;font-size:10.4px;color:#212121">https://api.eatfish.app</div>
<div class="a" style="left:1326.5px;top:122px;width:6px;height:18px;background:linear-gradient(90deg,rgba(255,255,255,0),#fff)"></div>
<div class="a" style="left:1337.0px;top:128.3px;width:5px;height:5px;border-radius:50%;background:#ea7148"></div>
<div class="a" style="left:1348.0px;top:125px;width:1px;height:12px;background:#f5f5f5"></div>
<div class="a" style="left:1259px;top:147px;width:83px;height:1.200px;background:#f2916c"></div>
<svg style="left:1361px;top:126px" width="10" height="10" viewBox="0 0 10 10"><path d="M5 0 V10 M0 5 H10" stroke="#6b6b6b" stroke-width="1"/></svg>
<svg style="left:1391px;top:129px" width="8" height="5" viewBox="0 0 8 5"><path d="M0.7 0.7 L4 4 L7.3 0.7" fill="none" stroke="#6b6b6b" stroke-width="1"/></svg>
<div class="a" style="left:1412px;top:114px;width:1px;height:34px;background:#f0f0f0"></div>
<div class="t g" style="left:1429px;top:124px;font-size:9.8px">No environment</div>
<svg style="left:1537px;top:129px" width="8" height="5" viewBox="0 0 8 5"><path d="M0.7 0.7 L4 4 L7.3 0.7" fill="none" stroke="#6b6b6b" stroke-width="1"/></svg>
<div class="a" style="left:1564px;top:124.600px;width:1px;height:14px;background:#e0e0e0"></div>
<svg style="left:1574px;top:125px" width="13" height="12" viewBox="0 0 13 12"><path d="M12 5 V1 H1 V11 H6" fill="none" stroke="#6b6b6b" stroke-width="1"/><path d="M3 3.500 H4 M5.500 3.500 H10 M3 6 H4 M5.500 6 H7.500 M3 8.500 H4" stroke="#6b6b6b" stroke-width="1"/><path d="M7 9.300 C8 7.600 11 7.600 12.500 9.300 C11 11 8 11 7 9.300Z" fill="#f9f9f9" stroke="#6b6b6b" stroke-width="0.900"/><circle cx="9.700" cy="9.300" r="0.900" fill="#6b6b6b"/></svg>
<!--TABS_END-->
<!-- request header -->
<svg style="left:389px;top:158px" width="22" height="21" viewBox="0 0 22 21"><rect x="0.500" y="0.500" width="21" height="20" rx="3" fill="#f1f7fa" stroke="#e8f0f4" stroke-width="1"/><path d="M6 5.200 H17 M15.400 3.800 L17 5.200 L15.400 6.600" fill="none" stroke="#3d93b5" stroke-width="0.800"/><path d="M15.500 15.800 H4.500 M6.100 14.400 L4.500 15.800 L6.100 17.200" fill="none" stroke="#3d93b5" stroke-width="0.800"/><text x="3.400" y="13.400" font-family="Liberation Sans" font-size="8.200" fill="#2f88ad" textLength="14.200" lengthAdjust="spacingAndGlyphs">HTTP</text></svg>
<div class="t" style="left:417px;top:161.800px;font-size:10.45px;font-weight:700;color:#212121">https://api.eatfish.app/fm/api/subscriptions/user</div>
<!-- save -->
<div class="a" style="left:1059px;top:155px;width:81px;height:26px;background:#efefef;border-radius:3px"></div>
<div class="a" style="left:1120px;top:155px;width:1px;height:26px;background:#e2e2e2"></div>
<svg style="left:1070px;top:162.800px" width="12" height="12" viewBox="0 0 12 12"><path d="M0.600 0.600 H8.800 L11.400 3.200 V11.400 H0.600Z" fill="none" stroke="#2b2b2b" stroke-width="1" stroke-linejoin="round"/><path d="M3 0.600 V3.600 H8 V0.600 M2.800 11.400 V7 H9.200 V11.400" fill="none" stroke="#2b2b2b" stroke-width="1"/></svg>
<div class="t" style="left:1088px;top:161.800px;font-size:10.4px;color:#2b2b2b">Save</div>
<svg style="left:1126px;top:166px" width="8" height="5" viewBox="0 0 8 5"><path d="M0.700 0.700 L4 4 L7.300 0.700" fill="none" stroke="#6b6b6b" stroke-width="1"/></svg>
<div class="a" style="left:1150px;top:157px;width:1px;height:22px;background:#f0f0f0"></div>
<div class="a" style="left:1161px;top:155px;width:58px;height:26px;background:#efefef;border-radius:3px"></div>
<div class="a" style="left:1163px;top:157px;width:26px;height:22px;background:#fff;border-radius:3px"></div>
<svg style="left:1170px;top:162px" width="13" height="13" viewBox="0 0 13 13"><path d="M1.200 11.800 L1.800 8.800 L9.300 1.300 C9.800 0.800 10.600 0.800 11.100 1.300 L11.700 1.900 C12.200 2.400 12.200 3.200 11.700 3.700 L4.200 11.200Z M8.200 2.400 L10.600 4.800" fill="none" stroke="#2b2b2b" stroke-width="1" stroke-linejoin="round"/></svg>
<svg style="left:1198px;top:162px" width="13" height="13" viewBox="0 0 13 13"><path d="M0.800 0.800 H12.200 V9.200 H6.800 L4.500 11.600 V9.200 H0.800Z" fill="none" stroke="#6b6b6b" stroke-width="1" stroke-linejoin="round"/><path d="M3.200 3.800 H9.800 M3.200 6.200 H7.800" stroke="#6b6b6b" stroke-width="1"/></svg>
<!-- url bar -->
<div class="a" style="left:389px;top:194px;width:742px;height:35px;border:1px solid #c4c4c4;border-radius:4px;background:#fff"></div>
<div class="a" style="left:481px;top:200px;width:1px;height:23px;background:#f2f2f2"></div>
<div class="t" style="left:399px;top:205.800px;font-size:10.4px;font-weight:700;color:#b8862e">POST</div>
<svg style="left:459px;top:209px" width="8" height="5" viewBox="0 0 8 5"><path d="M0.700 0.700 L4 4 L7.300 0.700" fill="none" stroke="#6b6b6b" stroke-width="1"/></svg>
<div class="t" style="left:493px;top:204px;font-size:11px;color:#212121">https://api.eatfish.app/fm/api/subscriptions/user</div>
<!-- send -->
<div class="a" style="left:1137px;top:195px;width:83px;height:33px;background:#0c7cf0;border-radius:3px"></div>
<div class="a" style="left:1193px;top:195px;width:1px;height:33px;background:#2a6fd0;opacity:.55"></div>
<div class="t" style="left:1150px;top:204.500px;font-size:12px;font-weight:700;color:#fff">Send</div>
<svg style="left:1203px;top:209px" width="8" height="5" viewBox="0 0 8 5"><path d="M0.700 0.700 L4 4 L7.300 0.700" fill="none" stroke="#fff" stroke-width="1.100"/></svg>
<!-- request tabs -->
<div class="t g" style="left:390px;top:241.600px;font-size:10.200px">Params</div>
<div class="t g" style="left:445px;top:241px;font-size:10.8px">Authorization</div>
<div class="t g" style="left:528px;top:241px;font-size:10.500px">Headers <span style="color:#2f8f5b">(10)</span></div>
<div class="t" style="left:613px;top:241px;font-size:10.500px;color:#212121">Body</div>
<div class="a" style="left:641px;top:246px;width:4.500px;height:4.500px;border-radius:50%;background:#1fa35c"></div>
<div class="a" style="left:613px;top:259.600px;width:33px;height:1.200px;background:#f2916c"></div>
<div class="t g" style="left:665px;top:241px;font-size:10.8px">Pre-request Script</div>
<div class="t g" style="left:773px;top:241.600px;font-size:10.200px">Tests</div>
<div class="t g" style="left:818px;top:241px;font-size:10.8px">Settings</div>
<div class="t" style="left:1177px;top:241.800px;font-size:10.4px;font-weight:700;color:#2766bb">Cookies</div>
<!-- body type row -->
<div class="a" style="left:396.5px;top:273px;width:10px;height:10px;border-radius:50%;border:1px solid #b0b0b0;background:#fff"></div>
<div class="t" style="left:411px;top:271px;font-size:10.9px;color:#2b2b2b">none</div>
<div class="a" style="left:447px;top:273px;width:10px;height:10px;border-radius:50%;border:1px solid #b0b0b0;background:#fff"></div>
<div class="t" style="left:462px;top:271px;font-size:10.9px;color:#2b2b2b">form-data</div>
<div class="a" style="left:522px;top:273px;width:10px;height:10px;border-radius:50%;border:1px solid #b0b0b0;background:#fff"></div>
<div class="t" style="left:537px;top:271px;font-size:11.100px;color:#2b2b2b">x-www-form-urlencoded</div>
<div class="a" style="left:668px;top:273px;width:10.400px;height:10.400px;border-radius:50%;border:2.800px solid #0f5fc4;background:#fff"></div>
<div class="t" style="left:683px;top:271px;font-size:10.9px;color:#2b2b2b">raw</div>
<div class="a" style="left:713px;top:273px;width:10px;height:10px;border-radius:50%;border:1px solid #b0b0b0;background:#fff"></div>
<div class="t" style="left:728px;top:271px;font-size:10.9px;color:#2b2b2b">binary</div>
<div class="a" style="left:770.5px;top:273px;width:10px;height:10px;border-radius:50%;border:1px solid #b0b0b0;background:#fff"></div>
<div class="t" style="left:785px;top:271.700px;font-size:10.300px;color:#2b2b2b">GraphQL</div>
<div class="t" style="left:842px;top:271.800px;font-size:10.4px;font-weight:700;color:#2766bb">JSON</div>
<svg style="left:880px;top:276px" width="8" height="5" viewBox="0 0 8 5"><path d="M0.700 0.700 L4 4 L7.300 0.700" fill="none" stroke="#1f63b8" stroke-width="1"/></svg>
<div class="t" style="left:1171px;top:271.800px;font-size:10.4px;font-weight:700;color:#2766bb">Beautify</div>
<!-- request editor -->
<div class="a" style="left:383px;top:302px;width:845px;height:326px;border:1px solid #efefef;background:#fff"></div>
<div class="a" style="left:1215px;top:303px;width:1px;height:324px;background:#ededed"></div>
<div class="a" style="left:1216px;top:361px;width:11px;height:2px;background:#3a3a3a"></div>
<div class="a" style="left:431px;top:303px;width:10px;height:15px;background:#dfe5ee;border-radius:3px 3px 3px 0"></div>
<div class="a" style="left:431px;top:318px;width:108px;height:15px;background:#dfe5ee;border-radius:0 3px 0 0"></div>
<div class="a" style="left:431px;top:333px;width:114px;height:15px;background:#dfe5ee;border-radius:0 3px 0 0"></div>
<div class="a" style="left:431px;top:348px;width:156px;height:15px;background:#dfe5ee;border-radius:0 3px 3px 0"></div>
<div class="a" style="left:431px;top:363px;width:6.5px;height:14px;background:#dfe5ee;border-radius:0 0 3px 3px"></div>
<div class="a" style="left:431px;top:318px;width:1px;height:45px;background:#8c8c8c"></div>
<div class="t mono" style="left:396px;top:303px;width:18px;text-align:right;font-size:10px;color:#4b7f9c;line-height:15px;height:15px">1</div>
<div class="t mono" style="left:431px;top:303.8px;line-height:15px;height:15px"><span style="color:#3a3a3a">{</span></div>
<div class="t mono" style="left:396px;top:318px;width:18px;text-align:right;font-size:10px;color:#4b7f9c;line-height:15px;height:15px">2</div>
<div class="t mono" style="left:431px;top:318.8px;line-height:15px;height:15px"><span style="color:#b4bcc8">····</span><span style="color:#a5393f">"user_id"</span><span style="color:#3a3a3a">:</span><span style="color:#b4bcc8">·</span><span style="color:#2f8f5b">1</span><span style="color:#3a3a3a">,</span></div>
<div class="t mono" style="left:396px;top:333px;width:18px;text-align:right;font-size:10px;color:#4b7f9c;line-height:15px;height:15px">3</div>
<div class="t mono" style="left:431px;top:333.8px;line-height:15px;height:15px"><span style="color:#b4bcc8">····</span><span style="color:#a5393f">"userRole"</span><span style="color:#3a3a3a">:</span><span style="color:#b4bcc8">·</span><span style="color:#2f8f5b">1</span><span style="color:#3a3a3a">,</span></div>
<div class="t mono" style="left:396px;top:348px;width:18px;text-align:right;font-size:10px;color:#4b7f9c;line-height:15px;height:15px">4</div>
<div class="t mono" style="left:431px;top:348.8px;line-height:15px;height:15px"><span style="color:#b4bcc8">····</span><span style="color:#a5393f">"phone"</span><span style="color:#3a3a3a">:</span><span style="color:#b4bcc8">·</span><span style="color:#2563b0">"8148217351"</span></div>
<div class="t mono" style="left:396px;top:363px;width:18px;text-align:right;font-size:10px;color:#1f3f66;line-height:15px;height:15px">5</div>
<div class="t mono" style="left:431px;top:363.8px;line-height:15px;height:15px"><span style="color:#3a3a3a">}</span></div>
<!--REQUEST_END-->
<!-- response -->
<div class="a" style="left:377px;top:631px;width:855px;height:1px;background:#ededed"></div>
<div class="t" style="left:383px;top:638.700px;font-size:10.4px;color:#212121">Body</div>
<div class="a" style="left:383px;top:656.600px;width:24px;height:1.200px;background:#f2916c"></div>
<div class="t g" style="left:421px;top:638.700px;font-size:10.4px">Cookies</div>
<div class="t g" style="left:472px;top:638.700px;font-size:10.4px">Headers <span style="color:#2f8f5b">(9)</span></div>
<div class="t g" style="left:542px;top:638.700px;font-size:10.4px">Test Results</div>
<svg style="left:861px;top:638px" width="15" height="14" viewBox="0 0 15 14"><circle cx="6.200" cy="6.500" r="5.400" fill="none" stroke="#5a5a5a" stroke-width="1"/><path d="M1 6.500 H6 M6.200 1 C3.500 3.500 3.500 9.500 6.200 12 M6.200 1 C8 2.600 8.800 4.500 8.800 6" fill="none" stroke="#5a5a5a" stroke-width="0.900"/><rect x="8.600" y="8.300" width="5.600" height="4.600" rx="0.800" fill="#fff" stroke="#5a5a5a" stroke-width="1"/><path d="M9.900 8.300 V7.300 C9.900 5.900 12.900 5.900 12.900 7.300 V8.300" fill="none" stroke="#5a5a5a" stroke-width="0.900"/></svg>
<div class="t g" style="left:885px;top:638px;font-size:9.600px">Status:</div><div class="t" style="left:919px;top:638px;font-size:9.600px;color:#2f8f5b">200 OK</div>
<div class="t g" style="left:962px;top:638px;font-size:9.600px">Time:</div><div class="t" style="left:989.500px;top:638px;font-size:9.600px;color:#2f8f5b">37 ms</div>
<div class="t g" style="left:1026px;top:638px;font-size:9.600px">Size:</div><div class="t" style="left:1050px;top:638px;font-size:9.600px;letter-spacing:-.35px;color:#2f8f5b">10.14 KB</div>
<svg style="left:1103px;top:638px" width="12" height="12" viewBox="0 0 12 12"><path d="M0.600 0.600 H8.800 L11.400 3.200 V11.400 H0.600Z" fill="none" stroke="#b0b0b0" stroke-width="1" stroke-linejoin="round"/><path d="M3 0.600 V3.600 H8 V0.600 M2.800 11.400 V7 H9.200 V11.400" fill="none" stroke="#b0b0b0" stroke-width="1"/></svg>
<div class="t" style="left:1121px;top:637.800px;font-size:10.300px;color:#b0b0b0">Save as example</div>
<svg style="left:1212px;top:643px" width="12" height="4" viewBox="0 0 12 4"><circle cx="2" cy="2" r="1.300" fill="none" stroke="#6b6b6b" stroke-width="0.800"/><circle cx="6" cy="2" r="1.300" fill="none" stroke="#6b6b6b" stroke-width="0.800"/><circle cx="10" cy="2" r="1.300" fill="none" stroke="#6b6b6b" stroke-width="0.800"/></svg>
<div class="a" style="left:383px;top:665px;width:234px;height:25px;background:#f2f2f2;border-radius:3px"></div>
<div class="a" style="left:383px;top:665px;width:55px;height:25px;background:#e9e9e9;border-radius:3px"></div>
<div class="t" style="left:383px;top:670.500px;width:55px;text-align:center;font-size:10.400px;color:#2b2b2b">Pretty</div>
<div class="t g" style="left:452px;top:670.500px;font-size:10.400px">Raw</div>
<div class="t g" style="left:498.500px;top:670.500px;font-size:10.400px">Preview</div>
<div class="t g" style="left:562.500px;top:670.500px;font-size:10.400px">Visualize</div>
<div class="a" style="left:624px;top:665px;width:63px;height:26px;background:#efefef;border-radius:3px"></div>
<div class="t" style="left:633px;top:671.500px;font-size:9.200px;color:#2b2b2b">JSON</div>
<svg style="left:668px;top:676px" width="8" height="5" viewBox="0 0 8 5"><path d="M0.700 0.700 L4 4 L7.300 0.700" fill="none" stroke="#6b6b6b" stroke-width="1"/></svg>
<svg style="left:701px;top:673px" width="13" height="11" viewBox="0 0 13 11"><path d="M0.500 1 H12.500 M0.500 5 H10.300 C13 5 13 9 10.300 9 H8 M9.600 7.300 L7.800 9 L9.600 10.700 M0.500 9 H4.500" fill="none" stroke="#6b6b6b" stroke-width="1"/></svg>
<svg style="left:1167px;top:672px" width="13" height="13" viewBox="0 0 13 13"><rect x="4.500" y="4.500" width="7.800" height="7.800" rx="1" fill="none" stroke="#6b6b6b" stroke-width="1"/><path d="M2.800 8.500 H1.700 C1.100 8.500 0.700 8.100 0.700 7.500 V1.700 C0.700 1.100 1.100 0.700 1.700 0.700 H7.500 C8.100 0.700 8.500 1.100 8.500 1.700 V2.800" fill="none" stroke="#6b6b6b" stroke-width="1"/></svg>
<svg style="left:1200px;top:672px" width="13" height="13" viewBox="0 0 13 13"><circle cx="5.800" cy="5.800" r="4.800" fill="none" stroke="#6b6b6b" stroke-width="1"/><path d="M9.300 9.300 L12.300 12.300" stroke="#6b6b6b" stroke-width="1"/></svg>
<div class="a" style="left:431px;top:695px;width:796px;height:14.500px;border:1px solid #e9e9e9"></div>
<div class="a" style="left:1215px;top:696px;width:1px;height:178px;background:#e2e2e2"></div>
<div class="a" style="left:431px;top:710px;width:1px;height:165px;background:#dcdcdc"></div>
<div class="a" style="left:455px;top:725px;width:1px;height:150px;background:#dcdcdc"></div>
<div class="t mono" style="left:390px;top:695.5px;width:24px;text-align:right;font-size:10px;color:#1f3f66;line-height:15px;height:15px">1</div>
<div class="t mono" style="left:431px;top:696.0px;line-height:15px;height:15px;white-space:pre"><span style="color:#3a3a3a">[</span></div>
<div class="t mono" style="left:390px;top:710.5px;width:24px;text-align:right;font-size:10px;color:#4b7f9c;line-height:15px;height:15px">2</div>
<div class="t mono" style="left:431px;top:711.0px;line-height:15px;height:15px;white-space:pre">    <span style="color:#3a3a3a">{</span></div>
<div class="t mono" style="left:390px;top:725.5px;width:24px;text-align:right;font-size:10px;color:#4b7f9c;line-height:15px;height:15px">3</div>
<div class="t mono" style="left:431px;top:726.0px;line-height:15px;height:15px;white-space:pre">        <span style="color:#a3343a">"subscription_id"</span><span style="color:#3a3a3a">:</span> <span style="color:#2f8f5b">32</span><span style="color:#3a3a3a">,</span></div>
<div class="t mono" style="left:390px;top:740.5px;width:24px;text-align:right;font-size:10px;color:#4b7f9c;line-height:15px;height:15px">4</div>
<div class="t mono" style="left:431px;top:741.0px;line-height:15px;height:15px;white-space:pre">        <span style="color:#a3343a">"user_id"</span><span style="color:#3a3a3a">:</span> <span style="color:#2f8f5b">1</span><span style="color:#3a3a3a">,</span></div>
<div class="t mono" style="left:390px;top:755.5px;width:24px;text-align:right;font-size:10px;color:#4b7f9c;line-height:15px;height:15px">5</div>
<div class="t mono" style="left:431px;top:756.0px;line-height:15px;height:15px;white-space:pre">        <span style="color:#a3343a">"plan_id"</span><span style="color:#3a3a3a">:</span> <span style="color:#2f8f5b">5</span><span style="color:#3a3a3a">,</span></div>
<div class="t mono" style="left:390px;top:770.5px;width:24px;text-align:right;font-size:10px;color:#4b7f9c;line-height:15px;height:15px">6</div>
<div class="t mono" style="left:431px;top:771.0px;line-height:15px;height:15px;white-space:pre">        <span style="color:#a3343a">"start_date"</span><span style="color:#3a3a3a">:</span> <span style="color:#1f5fae">"2025-05-01"</span><span style="color:#3a3a3a">,</span></div>
<div class="t mono" style="left:390px;top:785.5px;width:24px;text-align:right;font-size:10px;color:#4b7f9c;line-height:15px;height:15px">7</div>
<div class="t mono" style="left:431px;top:786.0px;line-height:15px;height:15px;white-space:pre">        <span style="color:#a3343a">"end_date"</span><span style="color:#3a3a3a">:</span> <span style="color:#1f5fae">"2025-12-31"</span><span style="color:#3a3a3a">,</span></div>
<div class="t mono" style="left:390px;top:800.5px;width:24px;text-align:right;font-size:10px;color:#4b7f9c;line-height:15px;height:15px">8</div>
<div class="t mono" style="left:431px;top:801.0px;line-height:15px;height:15px;white-space:pre">        <span style="color:#a3343a">"status"</span><span style="color:#3a3a3a">:</span> <span style="color:#2f8f5b">1</span><span style="color:#3a3a3a">,</span></div>
<div class="t mono" style="left:390px;top:815.5px;width:24px;text-align:right;font-size:10px;color:#4b7f9c;line-height:15px;height:15px">9</div>
<div class="t mono" style="left:431px;top:816.0px;line-height:15px;height:15px;white-space:pre">        <span style="color:#a3343a">"payment_status"</span><span style="color:#3a3a3a">:</span> <span style="color:#2f8f5b">1</span><span style="color:#3a3a3a">,</span></div>
<div class="t mono" style="left:390px;top:830.5px;width:24px;text-align:right;font-size:10px;color:#4b7f9c;line-height:15px;height:15px">10</div>
<div class="t mono" style="left:431px;top:831.0px;line-height:15px;height:15px;white-space:pre">        <span style="color:#a3343a">"amount"</span><span style="color:#3a3a3a">:</span> <span style="color:#1f5fae">"12500.00"</span><span style="color:#3a3a3a">,</span></div>
<div class="t mono" style="left:390px;top:845.5px;width:24px;text-align:right;font-size:10px;color:#4b7f9c;line-height:15px;height:15px">11</div>
<div class="t mono" style="left:431px;top:846.0px;line-height:15px;height:15px;white-space:pre">        <span style="color:#a3343a">"payment_date"</span><span style="color:#3a3a3a">:</span> <span style="color:#1f5fae">"2025-05-29"</span><span style="color:#3a3a3a">,</span></div>
<div class="t mono" style="left:390px;top:860.5px;width:24px;text-align:right;font-size:10px;color:#4b7f9c;line-height:15px;height:15px">12</div>
<div class="t mono" style="left:431px;top:861.0px;line-height:15px;height:15px;white-space:pre">        <span style="color:#a3343a">"createdAt"</span><span style="color:#3a3a3a">:</span> <span style="color:#1f5fae">"2025-05-29T15:41:01.000Z"</span><span style="color:#3a3a3a">,</span></div>
<div class="a" style="left:377px;top:875px;width:855px;height:4px;background:#fff"></div>
<!--RESPONSE_END-->
<!-- right panel -->
<div class="a" style="left:1232px;top:149px;width:1px;height:731px;background:#f0f0f0"></div>
<div class="a" style="left:1240px;top:155px;width:26px;height:26px;background:#efefef;border-radius:3px"></div>
<svg style="left:1246px;top:163px" width="14" height="10" viewBox="0 0 14 10"><path d="M3.800 1.500 L0.800 5 L3.800 8.500 M10.200 1.500 L13.200 5 L10.200 8.500 M8.300 0.500 L5.700 9.500" fill="none" stroke="#2b2b2b" stroke-width="1"/></svg>
<div class="t" style="left:1280px;top:161px;font-size:11.800px;font-weight:700;color:#212121">Code snippet</div>
<svg style="left:1575px;top:163px" width="10" height="10" viewBox="0 0 10 10"><path d="M0.800 0.800 L9.200 9.200 M9.200 0.800 L0.800 9.200" stroke="#5a5a5a" stroke-width="1"/></svg>
<div class="a" style="left:1280px;top:189px;width:313px;height:162px;background:#f9f9f9;border-radius:4px"></div>
<div class="t" style="left:1296px;top:202px;font-size:10px;color:#2b2b2b">cURL</div>
<svg style="left:1329px;top:206px" width="8" height="5" viewBox="0 0 8 5"><path d="M0.700 0.700 L4 4 L7.300 0.700" fill="none" stroke="#5a5a5a" stroke-width="1"/></svg>
<svg style="left:1539px;top:201px" width="14" height="14" viewBox="0 0 14 14"><path d="M5.900 0.800 H8.100 L8.500 2.600 L9.700 3.300 L11.400 2.700 L12.500 4.600 L11.200 5.800 V7.200 L12.500 8.400 L11.400 10.300 L9.700 9.700 L8.500 10.400 L8.100 12.200 H5.900 L5.500 10.400 L4.300 9.700 L2.600 10.300 L1.500 8.400 L2.800 7.200 V5.800 L1.500 4.600 L2.600 2.700 L4.300 3.300 L5.500 2.600Z" transform="translate(0 0.500)" fill="none" stroke="#6b6b6b" stroke-width="1" stroke-linejoin="round"/><circle cx="7" cy="7" r="2.100" fill="none" stroke="#6b6b6b" stroke-width="1"/></svg>
<svg style="left:1567px;top:202px" width="13" height="13" viewBox="0 0 13 13"><rect x="4.500" y="4.500" width="7.800" height="7.800" rx="1" fill="none" stroke="#6b6b6b" stroke-width="1"/><path d="M2.800 8.500 H1.700 C1.100 8.500 0.700 8.100 0.700 7.500 V1.700 C0.700 1.100 1.100 0.700 1.700 0.700 H7.500 C8.100 0.700 8.500 1.100 8.500 1.700 V2.800" fill="none" stroke="#6b6b6b" stroke-width="1"/></svg>
<div class="t mono" style="left:1294px;top:225.5px;width:13px;text-align:right;color:#9a9a9a;line-height:15px;height:15px">1</div>
<div class="t mono" style="left:1313px;top:225.5px;line-height:15px;height:15px;white-space:pre"><span style="color:#2b2b2b">curl --location </span><span style="color:#3f3fbf">'https://api.eatfish.app/</span></div>
<div class="t mono" style="left:1313px;top:240.5px;line-height:15px;height:15px;white-space:pre">    <span style="color:#3f3fbf">fm/api/subscriptions/user'</span><span style="color:#2b2b2b"> \</span></div>
<div class="t mono" style="left:1294px;top:255.5px;width:13px;text-align:right;color:#9a9a9a;line-height:15px;height:15px">2</div>
<div class="t mono" style="left:1313px;top:255.5px;line-height:15px;height:15px;white-space:pre"><span style="color:#2b2b2b">--header </span><span style="color:#3f3fbf">'Content-Type: application/json'</span><span style="color:#2b2b2b"> \</span></div>
<div class="t mono" style="left:1294px;top:270.5px;width:13px;text-align:right;color:#9a9a9a;line-height:15px;height:15px">3</div>
<div class="t mono" style="left:1313px;top:270.5px;line-height:15px;height:15px;white-space:pre"><span style="color:#2b2b2b">--</span><span style="color:#8a2a6a;font-weight:700">data</span> <span style="color:#3f3fbf">'{</span></div>
<div class="t mono" style="left:1294px;top:285.5px;width:13px;text-align:right;color:#9a9a9a;line-height:15px;height:15px">4</div>
<div class="t mono" style="left:1313px;top:285.5px;line-height:15px;height:15px;white-space:pre">    <span style="color:#3f3fbf">"user_id"</span><span style="color:#2b2b2b">: </span><span style="color:#2f8f5b">1</span><span style="color:#2b2b2b">,</span></div>
<div class="t mono" style="left:1294px;top:300.5px;width:13px;text-align:right;color:#9a9a9a;line-height:15px;height:15px">5</div>
<div class="t mono" style="left:1313px;top:300.5px;line-height:15px;height:15px;white-space:pre">    <span style="color:#3f3fbf">"userRole"</span><span style="color:#2b2b2b">: </span><span style="color:#2f8f5b">1</span><span style="color:#2b2b2b">,</span></div>
<div class="t mono" style="left:1294px;top:315.5px;width:13px;text-align:right;color:#9a9a9a;line-height:15px;height:15px">6</div>
<div class="t mono" style="left:1313px;top:315.5px;line-height:15px;height:15px;white-space:pre">    <span style="color:#3f3fbf">"phone"</span><span style="color:#2b2b2b">: </span><span style="color:#3f3fbf">"8148217351"</span></div>
<div class="t mono" style="left:1294px;top:330.5px;width:13px;text-align:right;color:#9a9a9a;line-height:15px;height:15px">7</div>
<div class="t mono" style="left:1313px;top:330.5px;line-height:15px;height:15px;white-space:pre"><span style="color:#2b2b2b">}</span><span style="color:#3f3fbf">'</span></div>
<!-- footer -->
<svg style="left:65px;top:885px" width="11" height="10" viewBox="0 0 11 10"><path d="M0.500 0.500 H10.500 V9.500 H0.500Z M4.200 0.500 V9.500 M1.800 3 H3 M1.800 5 H3" fill="none" stroke="#6b6b6b" stroke-width="0.900"/></svg>
<svg style="left:86px;top:884.500px" width="11" height="11" viewBox="0 0 11 11"><circle cx="5.500" cy="5.500" r="4.700" fill="none" stroke="#6b6b6b" stroke-width="0.900"/><path d="M3.300 5.600 L4.900 7.200 L7.800 4" fill="none" stroke="#6b6b6b" stroke-width="0.900"/></svg>
<div class="t" style="left:100px;top:883px;color:#747474;font-size:9.600px">Online</div>
<svg style="left:137px;top:884.500px" width="11" height="11" viewBox="0 0 11 11"><circle cx="4.800" cy="4.800" r="4" fill="none" stroke="#6b6b6b" stroke-width="0.900"/><path d="M7.700 7.700 L10.300 10.300" stroke="#6b6b6b" stroke-width="0.900"/></svg>
<div class="t" style="left:151px;top:883px;color:#747474;font-size:9.600px">Find and replace</div>
<svg style="left:232px;top:885px" width="11" height="10" viewBox="0 0 11 10"><path d="M0.500 0.500 H10.500 V9.500 H0.500Z M0.500 2.500 H10.500 M2.500 4.500 L4.300 6 L2.500 7.500 M5.500 7.700 H8" fill="none" stroke="#6b6b6b" stroke-width="0.900"/></svg>
<div class="t" style="left:246px;top:883px;color:#747474;font-size:9.600px">Console</div>
<svg style="left:1180px;top:884.500px" width="11" height="11" viewBox="0 0 11 11"><circle cx="6" cy="6" r="4.300" fill="none" stroke="#6b3fa0" stroke-width="1"/><path d="M6 6 V3.500 M6 6 L8 7.200 M1.800 0.800 V3.200 M0.600 2 H3" fill="none" stroke="#6b3fa0" stroke-width="0.900"/></svg>
<div class="t" style="left:1193px;top:883px;color:#6b3fa0;font-size:9.600px">Postbot</div>
<svg style="left:1240px;top:885px" width="10" height="10" viewBox="0 0 10 10"><rect x="0.500" y="0.500" width="9" height="9" rx="1" fill="none" stroke="#6b6b6b" stroke-width="0.900"/><path d="M3.800 3 L6.800 5 L3.800 7Z" fill="#6b6b6b"/></svg>
<div class="t" style="left:1253px;top:883px;color:#747474;font-size:9.600px">Runner</div>
<svg style="left:1297px;top:884.500px" width="11" height="11" viewBox="0 0 11 11"><circle cx="3.800" cy="7.200" r="2.600" fill="none" stroke="#6b6b6b" stroke-width="0.900"/><path d="M5.800 5.200 L9.800 1.200 M7 1 H10 V4 M5 0.800 C6 0.800 6.500 1.300 6.500 2" fill="none" stroke="#6b6b6b" stroke-width="0.900"/></svg>
<div class="t" style="left:1311px;top:883px;color:#747474;font-size:9.600px">Capture requests</div>
<svg style="left:1399px;top:884.500px" width="11" height="11" viewBox="0 0 11 11"><path d="M5.500 0.800 C5.500 2.500 6.500 3.500 8 3.300 C8 4.500 8.800 5.200 10.200 5.200 C10.200 8 8.200 10.200 5.500 10.200 C2.800 10.200 0.800 8.200 0.800 5.500 C0.800 2.800 2.800 0.800 5.500 0.800Z" fill="none" stroke="#6b6b6b" stroke-width="0.900"/><circle cx="3.600" cy="4.800" r="0.600" fill="#6b6b6b"/><circle cx="5.200" cy="7.600" r="0.600" fill="#6b6b6b"/><circle cx="7.400" cy="6.400" r="0.500" fill="#6b6b6b"/></svg>
<div class="t" style="left:1412px;top:883px;color:#747474;font-size:9.600px">Cookies</div>
<svg style="left:1461px;top:884.500px" width="11" height="11" viewBox="0 0 11 11"><path d="M0.700 9.500 V0.700 H4.500 V3 M0.700 3.500 H3.500 M6.500 0.700 H9.500 V3.500" fill="none" stroke="#6b6b6b" stroke-width="0.900"/><rect x="4.800" y="6.200" width="5.400" height="4.200" rx="0.600" fill="none" stroke="#6b6b6b" stroke-width="0.900"/><path d="M6 6.200 V5.200 C6 3.900 9 3.900 9 5.200 V6.200" fill="none" stroke="#6b6b6b" stroke-width="0.900"/></svg>
<div class="t" style="left:1474px;top:883px;color:#747474;font-size:9.600px">Vault</div>
<svg style="left:1509px;top:884px" width="10" height="12" viewBox="0 0 10 12"><path d="M0.500 2.500 H9.500 M3.300 2.500 V0.800 H6.700 V2.500 M1.500 2.500 V11 H8.500 V2.500 M3.800 4.500 V9 M6.200 4.500 V9" fill="none" stroke="#6b6b6b" stroke-width="0.900"/></svg>
<div class="t" style="left:1522px;top:883px;color:#747474;font-size:9.600px">Trash</div>
<svg style="left:1559px;top:885px" width="10" height="10" viewBox="0 0 10 10"><path d="M0.500 0.500 H9.500 V9.500 H0.500Z M5 0.500 V9.500 M0.500 5 H9.500" fill="none" stroke="#6b6b6b" stroke-width="0.900"/><rect x="2" y="2" width="1.600" height="1.600" fill="#6b6b6b"/><rect x="6.400" y="6.400" width="1.600" height="1.600" fill="#6b6b6b"/></svg>
<svg style="left:1582px;top:884.500px" width="11" height="11" viewBox="0 0 11 11"><circle cx="5.500" cy="5.500" r="4.800" fill="none" stroke="#6b6b6b" stroke-width="0.900"/><path d="M4 4.300 C4 2.600 7 2.600 7 4.300 C7 5.400 5.500 5.400 5.500 6.600" fill="none" stroke="#6b6b6b" stroke-width="0.900"/><circle cx="5.500" cy="8.100" r="0.550" fill="#6b6b6b"/></svg>
<!--RIGHT_END-->
</body>
</html>
